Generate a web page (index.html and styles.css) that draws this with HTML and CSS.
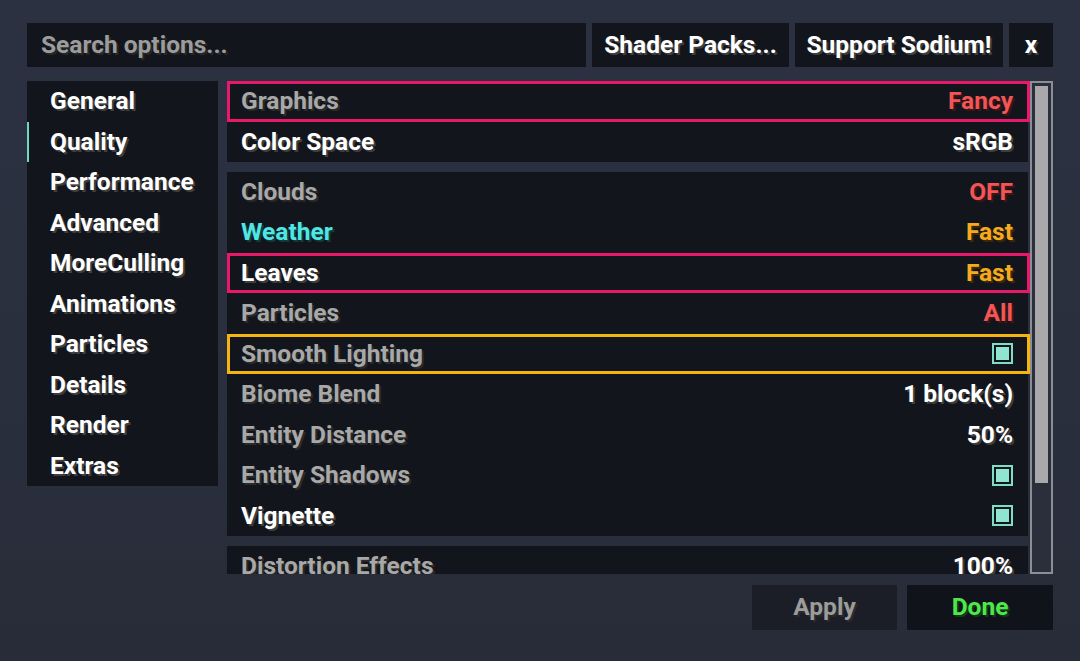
FILE: index.html
```html
<!DOCTYPE html>
<html lang="en">
<head>
<meta charset="utf-8">
<title>Sodium Video Settings</title>
<link rel="stylesheet" href="styles.css">
</head>
<body>
<div class="screen">
  <div class="topbar">
    <div class="search">Search options...</div>
    <div class="btn shader">Shader Packs...</div>
    <div class="btn support">Support Sodium!</div>
    <div class="btn close">x</div>
  </div>
  <div class="main">
    <nav class="sidebar">
      <div class="nav-item">General</div>
      <div class="nav-item active">Quality</div>
      <div class="nav-item">Performance</div>
      <div class="nav-item">Advanced</div>
      <div class="nav-item">MoreCulling</div>
      <div class="nav-item">Animations</div>
      <div class="nav-item">Particles</div>
      <div class="nav-item">Details</div>
      <div class="nav-item">Render</div>
      <div class="nav-item">Extras</div>
    </nav>
    <div class="options">
      <div class="group">
        <div class="row hl-pink"><span class="label gray">Graphics</span><span class="value red">Fancy</span></div>
        <div class="row"><span class="label white">Color Space</span><span class="value white">sRGB</span></div>
      </div>
      <div class="group">
        <div class="row"><span class="label gray">Clouds</span><span class="value red">OFF</span></div>
        <div class="row"><span class="label aqua">Weather</span><span class="value gold">Fast</span></div>
        <div class="row hl-pink"><span class="label white">Leaves</span><span class="value gold">Fast</span></div>
        <div class="row"><span class="label gray">Particles</span><span class="value red">All</span></div>
        <div class="row hl-amber"><span class="label gray">Smooth Lighting</span><span class="check"></span></div>
        <div class="row"><span class="label gray">Biome Blend</span><span class="value white">1 block(s)</span></div>
        <div class="row"><span class="label gray">Entity Distance</span><span class="value white">50%</span></div>
        <div class="row"><span class="label gray">Entity Shadows</span><span class="check"></span></div>
        <div class="row"><span class="label white">Vignette</span><span class="check"></span></div>
      </div>
      <div class="group">
        <div class="row"><span class="label gray">Distortion Effects</span><span class="value white">100%</span></div>
      </div>
    </div>
    <div class="scrollbar"><div class="thumb"></div></div>
  </div>
  <div class="footer">
    <div class="fbtn apply">Apply</div>
    <div class="fbtn done">Done</div>
  </div>
</div>
</body>
</html>
```

FILE: styles.css
```css
html, body {
  margin: 0;
  padding: 0;
}

body {
  width: 1080px;
  height: 661px;
  overflow: hidden;
  background: linear-gradient(180deg, #2c3142 0%, #2a2f3d 60%, #282c39 100%);
  font-family: Roboto, "Liberation Sans", sans-serif;
  font-weight: 700;
  font-size: 24.5px;
  line-height: 1;
}

.screen {
  display: flex;
  flex-direction: column;
  padding: 23px 27px 0 27px;
}

.topbar {
  display: flex;
  gap: 6px;
  height: 44px;
}

.search {
  width: 559px;
  background: #13151c;
  color: #9c9c9c;
  display: flex;
  align-items: center;
  padding-left: 14px;
  box-sizing: border-box;
  text-shadow: 2px 2px 0 #272727;
}

.btn {
  background: #13151c;
  color: #ffffff;
  display: flex;
  align-items: center;
  justify-content: center;
  text-shadow: 2px 2px 0 #3e3e3e;
}

.shader { width: 197px; }
.support { width: 208px; }
.close { width: 44px; }

.main {
  display: flex;
  margin-top: 14px;
  height: 493px;
}

.sidebar {
  width: 191px;
  height: 405px;
  background: #13151c;
  display: flex;
  flex-direction: column;
}

.nav-item {
  height: 40.5px;
  display: flex;
  align-items: center;
  padding-left: 23px;
  color: #ffffff;
  text-shadow: 2px 2px 0 #3e3e3e;
}

.nav-item.active {
  box-shadow: inset 2px 0 0 #6fd7c2;
}

.options {
  margin-left: 9px;
  width: 803px;
  height: 493px;
  overflow: hidden;
  display: flex;
  flex-direction: column;
  gap: 9.5px;
}

.group {
  background: #13151c;
  margin-right: 2px;
  flex-shrink: 0;
}

.row {
  height: 40.5px;
  display: flex;
  align-items: center;
  justify-content: space-between;
  padding: 0 15px 0 14px;
}

.hl-pink {
  outline: 3px solid #e8196b;
  outline-offset: -3px;
  margin-right: -2px;
  padding-right: 17px;
}

.hl-amber {
  outline: 3px solid #f4b512;
  outline-offset: -3px;
  margin-right: -2px;
  padding-right: 17px;
}

.white { color: #ffffff; text-shadow: 2px 2px 0 #3e3e3e; }
.gray { color: #a8a8a8; text-shadow: 2px 2px 0 #2a2a2a; }
.aqua { color: #4fe6e6; text-shadow: 2px 2px 0 #153a3a; }
.red { color: #f25555; text-shadow: 2px 2px 0 #3c1515; }
.gold { color: #f5aa20; text-shadow: 2px 2px 0 #3c2a05; }

.check {
  width: 21px;
  height: 21px;
  box-sizing: border-box;
  border: 2px solid #7fdcc6;
  padding: 2px;
  background: #8fe5d1;
  background-clip: content-box;
}

.scrollbar {
  width: 23px;
  height: 493px;
  box-sizing: border-box;
  border: 2px solid #8c8e95;
  padding: 3px;
  background: #2b2f3b;
}

.thumb {
  height: 397px;
  background: #a9a9ab;
}

.footer {
  display: flex;
  justify-content: flex-end;
  gap: 10px;
  margin-top: 11px;
}

.fbtn {
  height: 45px;
  display: flex;
  align-items: center;
  justify-content: center;
}

.apply {
  width: 145px;
  background: #1b1e27;
  color: #9c9c9c;
  text-shadow: 2px 2px 0 #2a2a2a;
}

.done {
  width: 146px;
  background: #11131a;
  color: #4ee84e;
  text-shadow: 2px 2px 0 #153a15;
}
```
